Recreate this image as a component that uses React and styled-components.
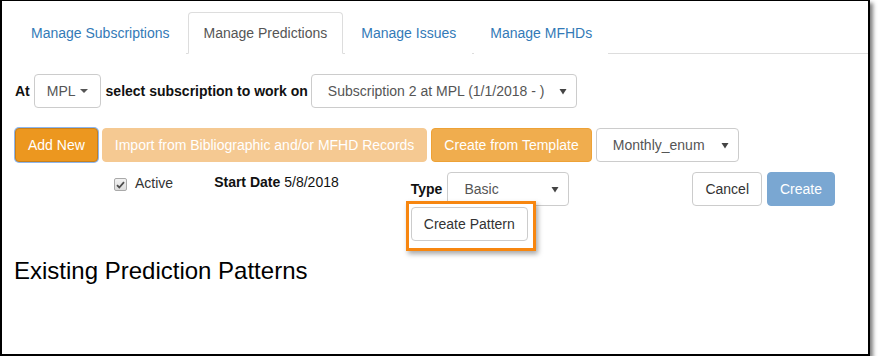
import styled, { createGlobalStyle } from "styled-components";

const GlobalStyle = createGlobalStyle`
  body {
    margin: 0;
    background: #fff;
    font-family: "Liberation Sans", Arial, sans-serif;
    font-size: 14px;
    color: #333;
  }
`;

const Frame = styled.div`
  box-sizing: border-box;
  width: 870px;
  height: 356px;
  border: 1px solid #000;
  border-left-width: 2px;
  border-right-width: 2px;
  border-bottom-width: 2px;
  box-shadow: 3px 3px 4px rgba(0, 0, 0, 0.5);
  padding: 11px 0 0 13px;
  overflow: hidden;
`;

const Tabs = styled.ul`
  display: flex;
  list-style: none;
  margin: 0;
  padding: 0;
  border-bottom: 1px solid #ddd;
`;

const Tab = styled.li`
  margin: 0 2px -1px 0;
  padding: 10px 15px;
  line-height: 20px;
  border: 1px solid ${(p) => (p.$active ? "#ddd" : "transparent")};
  border-bottom-color: ${(p) => (p.$active ? "#fff" : "transparent")};
  border-radius: 4px 4px 0 0;
  color: ${(p) => (p.$active ? "#555" : "#337ab7")};
  background: #fff;
`;

const Row = styled.div`
  display: flex;
  align-items: ${(p) => p.$align || "center"};
  margin-top: ${(p) => p.$top || 0}px;
`;

const Label = styled.b`
  color: #111;
  line-height: ${(p) => p.$lh || 20}px;
  margin-right: ${(p) => p.$mr || 0}px;
`;

const Button = styled.div`
  box-sizing: border-box;
  height: 34px;
  display: inline-flex;
  align-items: center;
  justify-content: center;
  padding: 0 12px;
  border-radius: 4px;
  border: 1px solid ${(p) => p.$border || "#ccc"};
  background: ${(p) => p.$bg || "#fff"};
  color: ${(p) => p.$color || "#333"};
  margin-right: ${(p) => p.$mr || 0}px;
  white-space: nowrap;
  ${(p) => p.$focus && "box-shadow: 0 0 0 1px #8db6ee;"}
`;

const Select = styled.div`
  box-sizing: border-box;
  height: 34px;
  width: ${(p) => p.$w}px;
  display: flex;
  align-items: center;
  padding: 0 9px 0 ${(p) => p.$pl || 16}px;
  border: 1px solid #ccc;
  border-radius: 4px;
  background: #fff;
  color: #555;
  margin-right: ${(p) => p.$mr || 0}px;
  span {
    flex: 1;
    white-space: nowrap;
  }
`;

const Caret = styled.i`
  display: inline-block;
  margin-left: 4px;
  border-top: 4px solid #555;
  border-left: 4px solid transparent;
  border-right: 4px solid transparent;
`;

const Col = styled.div`
  display: flex;
  flex-direction: ${(p) => p.$dir || "row"};
  align-items: flex-start;
  margin-left: ${(p) => p.$ml || 0}px;
  padding-top: ${(p) => p.$pt || 0}px;
`;

const Check = styled.span`
  box-sizing: border-box;
  width: 13px;
  height: 13px;
  margin-top: 5px;
  border: 1px solid #a9a9a9;
  border-radius: 2px;
  background: linear-gradient(#f2f2f2, #dcdcdc);
  display: flex;
  align-items: center;
  justify-content: center;
`;

const CheckText = styled.span`
  line-height: 20px;
  margin-left: 8px;
`;

const Value = styled.span`
  line-height: 20px;
  color: #111;
`;

const Highlight = styled.div`
  margin: -5px 0 0 -5px;
  padding: 3px 5px 7px 2px;
  border: 3px solid #f7860f;
  box-shadow: 2px 3px 5px rgba(0, 0, 0, 0.35);
  background: #fff;
`;

const Heading = styled.h3`
  margin: 7px 0 0 -1px;
  font-size: 24px;
  line-height: 26px;
  font-weight: normal;
  color: #000;
`;

const Arrow = () => (
  <svg width="8" height="7" viewBox="0 0 8 7">
    <path d="M0.5 1h7L4 6.5z" fill="#444" />
  </svg>
);

export default function App() {
  return (
    <Frame>
      <GlobalStyle />
      <Tabs>
        <Tab>Manage Subscriptions</Tab>
        <Tab $active>Manage Predictions</Tab>
        <Tab>Manage Issues</Tab>
        <Tab>Manage MFHDs</Tab>
      </Tabs>

      <Row $top={20}>
        <Label $mr={4}>At</Label>
        <Button $color="#555" $mr={5}>
          MPL <Caret />
        </Button>
        <Label $mr={3}>select subscription to work on</Label>
        <Select $w={266}>
          <span>Subscription 2 at MPL (1/1/2018 - )</span>
          <Arrow />
        </Select>
      </Row>

      <Row $top={20}>
        <Button $bg="#ec971f" $border="#c7801c" $color="#fff" $mr={4} $focus>
          Add New
        </Button>
        <Button $bg="#f5c992" $border="#f5c992" $color="#fff" $mr={4}>
          Import from Bibliographic and/or MFHD Records
        </Button>
        <Button $bg="#f0ad4e" $border="#eea236" $color="#fff" $mr={4}>
          Create from Template
        </Button>
        <Select $w={143}>
          <span>Monthly_enum</span>
          <Arrow />
        </Select>
      </Row>

      <Row $top={10} $align="flex-start">
        <Col $ml={99} $pt={1}>
          <Check>
            <svg width="9" height="8" viewBox="0 0 9 8">
              <path d="M1 4.2l2.3 2.3L8 1.2" stroke="#4d4d4d" strokeWidth="1.8" fill="none" />
            </svg>
          </Check>
          <CheckText>Active</CheckText>
        </Col>
        <Col $ml={41}>
          <Label $mr={4}>Start Date</Label>
          <Value>5/8/2018</Value>
        </Col>
        <Col $ml={72} $dir="column">
          <Row>
            <Label $lh={34} $mr={5}>Type</Label>
            <Select $w={122}>
              <span>Basic</span>
              <Arrow />
            </Select>
          </Row>
          <Highlight>
            <Button>Create Pattern</Button>
          </Highlight>
        </Col>
        <Col $ml={123}>
          <Button $mr={5}>Cancel</Button>
          <Button $bg="#7aa7d2" $border="#7aa7d2" $color="#fff">
            Create
          </Button>
        </Col>
      </Row>

      <Heading>Existing Prediction Patterns</Heading>
    </Frame>
  );
}
